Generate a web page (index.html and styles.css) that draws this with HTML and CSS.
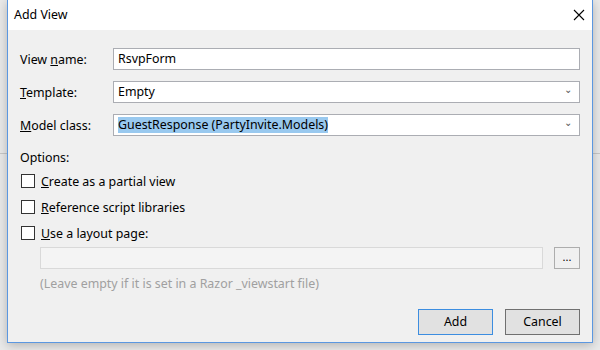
FILE: index.html
```html
<!DOCTYPE html>
<html lang="en">
<head>
    <meta charset="UTF-8">
    <title>Add View</title>
    <link rel="stylesheet" href="styles.css">
</head>
<body>
<div class="window">
    <div class="titlebar">
        <span class="title">Add View</span>
        <svg class="close" width="12" height="12" viewBox="0 0 12 12">
            <path d="M1 1 L11 11 M11 1 L1 11" stroke="#000" stroke-width="1.1" fill="none"/>
        </svg>
    </div>
    <div class="content">
        <div class="fields">
            <label class="label">View <u>n</u>ame:</label>
            <div class="box">RsvpForm</div>
            <label class="label"><u>T</u>emplate:</label>
            <div class="box combo">Empty<span class="chev">&#8964;</span></div>
            <label class="label"><u>M</u>odel class:</label>
            <div class="box combo"><span class="sel">GuestResponse (PartyInvite.Models)</span><span class="chev">&#8964;</span></div>
        </div>
        <div class="options">Options:</div>
        <div class="check"><span class="tick"></span><u>C</u>reate as a partial view</div>
        <div class="check"><span class="tick"></span><u>R</u>eference script libraries</div>
        <div class="check"><span class="tick"></span><u>U</u>se a layout page:</div>
        <div class="layout">
            <div class="box disabled"></div>
            <div class="browse">...</div>
        </div>
        <div class="hint">(Leave empty if it is set in a Razor _viewstart file)</div>
        <div class="buttons">
            <div class="btn default">Add</div>
            <div class="btn">Cancel</div>
        </div>
    </div>
</div>
</body>
</html>
```

FILE: styles.css
```css
body {
    margin: 0;
    height: 350px;
    overflow: hidden;
    font-family: "Noto Sans", sans-serif;
    font-size: 12.4px;
    color: #000;
    background: #eaeaea linear-gradient(to bottom, transparent 153px, #c8c8c8 153px, #c8c8c8 154px, transparent 154px);
}

.window {
    margin-left: 7px;
    width: 584px;
    height: 342px;
    border: 1px solid #5b97e0;
    border-top: none;
    background: #f0f0f0;
    box-shadow: 0 2px 10px rgba(0, 0, 0, 0.25);
}

.titlebar {
    height: 30px;
    background: #fff;
    display: flex;
    align-items: center;
    justify-content: space-between;
    padding: 0 7px 0 6px;
}

.title {
    margin-top: -1px;
}

.content {
    padding: 18px 12px 0 12px;
}

.fields {
    display: grid;
    grid-template-columns: 93px 1fr;
    row-gap: 11px;
    align-items: center;
}

.box {
    height: 20px;
    border: 1px solid #abadb3;
    background: #fff;
    padding-left: 4px;
    line-height: 20px;
    display: flex;
    align-items: center;
}

.combo {
    position: relative;
}

.chev {
    position: absolute;
    right: 7px;
    top: -3px;
    font-size: 10px;
    color: #555;
}

.sel {
    background: #99c9ef;
    line-height: 16px;
}

.options {
    margin-top: 13px;
    height: 16px;
    margin-bottom: 3px;
}

.check {
    display: flex;
    align-items: center;
    height: 26px;
}

.tick {
    width: 12px;
    height: 12px;
    border: 1px solid #333;
    background: #fff;
    margin: 0 6px 0 1px;
}

.layout {
    display: flex;
    gap: 11px;
    margin: 1px 0 0 20px;
}

.layout .box {
    flex: 1;
}

.disabled {
    background: #f4f4f4;
    border-color: #d9d9d9;
}

.browse {
    width: 24px;
    height: 20px;
    border: 1px solid #adadad;
    background: #f0f0f0;
    text-align: center;
    line-height: 18px;
    font-size: 11px;
}

.hint {
    margin: 6px 0 0 20px;
    color: #a0a0a0;
    height: 16px;
}

.buttons {
    display: flex;
    justify-content: flex-end;
    gap: 12px;
    margin-top: 18px;
}

.btn {
    width: 73px;
    height: 24px;
    border: 1px solid #707070;
    background: #e1e1e1;
    text-align: center;
    line-height: 24px;
}

.btn.default {
    border-color: #3c8de0;
}
```
